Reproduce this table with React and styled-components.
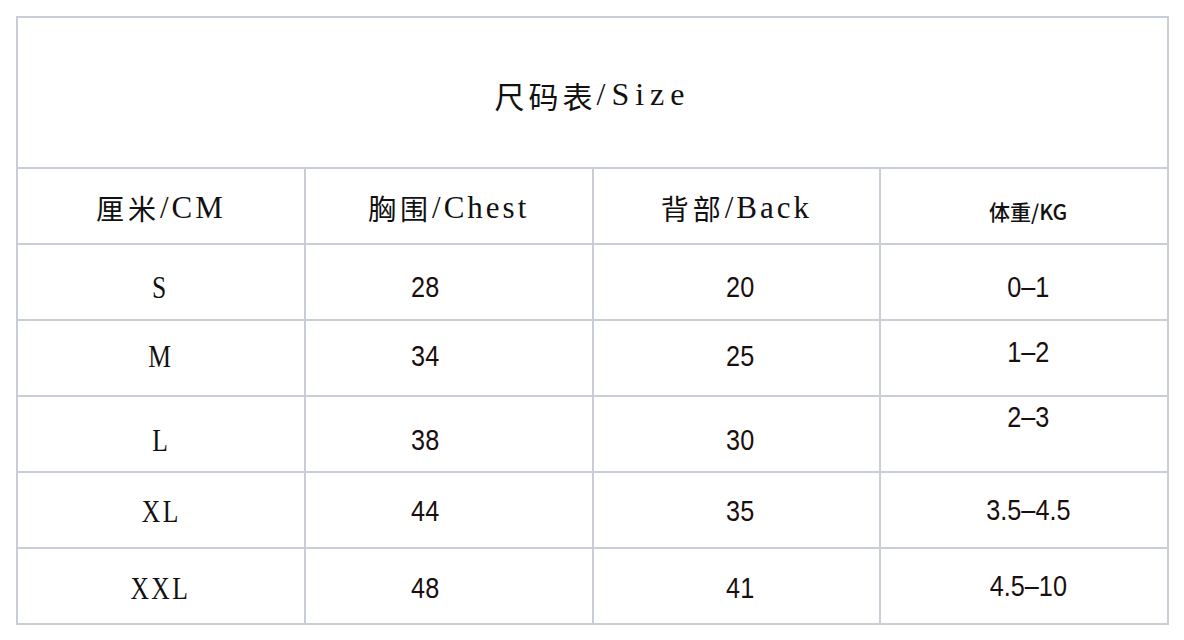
import styled, { createGlobalStyle } from "styled-components";

const GlobalStyle = createGlobalStyle`
  html, body {
    margin: 0;
    background: #ffffff;
  }
`;

// dy = how far the printed value sits below the middle of its cell
const rows = [
  { size: "S", chest: "28", back: "20", weight: "0–1", dy: 5, wdy: 5 },
  { size: "M", chest: "34", back: "25", weight: "1–2", dy: -2, wdy: -6 },
  { size: "L", chest: "38", back: "30", weight: "2–3", dy: 6, wdy: -17 },
  { size: "XL", chest: "44", back: "35", weight: "3.5–4.5", dy: 1, wdy: 0 },
  { size: "XXL", chest: "48", back: "41", weight: "4.5–10", dy: 2, wdy: 0 },
];

const Page = styled.div`
  padding: 16px 15px 15px 16px;
`;

const Chart = styled.div`
  display: grid;
  grid-template-columns: repeat(4, 1fr);
  grid-template-rows: 149px 74px repeat(5, 74px);
  gap: 2px;
  padding: 2px;
  background: #c9cdd6;
  width: 1153px;
  box-sizing: border-box;
`;

const Cell = styled.div`
  grid-column: ${(p) => (p.$wide ? "1 / -1" : "auto")};
  background: #fff;
  display: flex;
  align-items: center;
  justify-content: center;
  padding-top: ${(p) => Math.max(0, (p.$dy || 0) * 2)}px;
  padding-bottom: ${(p) => Math.max(0, -(p.$dy || 0) * 2)}px;
  padding-left: ${(p) => p.$padLeft || 0}px;
  padding-right: ${(p) => p.$padRight || 0}px;
  box-sizing: border-box;
  white-space: nowrap;
`;

const Han = styled.span`
  font-family: "Noto Sans CJK SC", sans-serif;
  font-size: ${(p) => p.$size || 28}px;
  letter-spacing: 4px;
  color: #111;
`;

const Latin = styled.span`
  font-family: "Liberation Serif", serif;
  font-size: ${(p) => p.$size || 31}px;
  letter-spacing: ${(p) => p.$spacing ?? 3}px;
  color: #111;
`;

const SizeLabel = styled.span`
  display: inline-block;
  font-family: "Liberation Serif", serif;
  font-size: 32px;
  letter-spacing: 3px;
  color: #111;
  transform: scaleX(0.8);
`;

const Figure = styled.span`
  display: inline-block;
  font-family: "Liberation Sans", Arial, sans-serif;
  font-size: 29px;
  color: #1a0f0f;
  transform: scaleX(0.87);
`;

const WeightHead = styled.span`
  font-family: "Noto Sans CJK SC", sans-serif;
  font-size: 21px;
  font-weight: 500;
  color: #111;
`;

function Heading({ han, latin }) {
  return (
    <>
      <Han>{han}</Han>
      <Latin>{latin}</Latin>
    </>
  );
}

function Row({ size, chest, back, weight, dy, wdy }) {
  return (
    <>
      <Cell $dy={dy}>
        <SizeLabel>{size}</SizeLabel>
      </Cell>
      <Cell $dy={dy} $padRight={46}>
        <Figure>{chest}</Figure>
      </Cell>
      <Cell $dy={dy} $padLeft={8}>
        <Figure>{back}</Figure>
      </Cell>
      <Cell $dy={wdy} $padLeft={8}>
        <Figure>{weight}</Figure>
      </Cell>
    </>
  );
}

export default function App() {
  return (
    <>
      <GlobalStyle />
      <Page>
        <Chart>
          <Cell $wide $dy={2}>
            <Han $size={30}>尺码表</Han>
            <Latin $size={32} $spacing={6}>
              /Size
            </Latin>
          </Cell>

          <Cell $dy={2}>
            <Heading han="厘米" latin="/CM" />
          </Cell>
          <Cell $dy={2}>
            <Heading han="胸围" latin="/Chest" />
          </Cell>
          <Cell $dy={2}>
            <Heading han="背部" latin="/Back" />
          </Cell>
          <Cell $dy={5} $padLeft={8}>
            <WeightHead>体重/KG</WeightHead>
          </Cell>

          {rows.map((r) => (
            <Row key={r.size} {...r} />
          ))}
        </Chart>
      </Page>
    </>
  );
}
